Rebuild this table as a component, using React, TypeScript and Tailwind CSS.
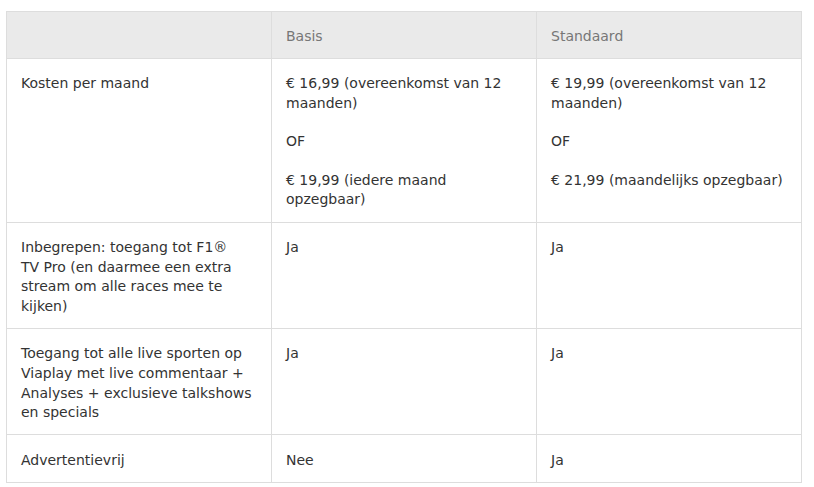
export default function App() {
  const rows: { label: string; basis: string[]; standaard: string[] }[] = [
    {
      label: 'Kosten per maand',
      basis: ['€ 16,99 (overeenkomst van 12 maanden)', 'OF', '€ 19,99 (iedere maand opzegbaar)'],
      standaard: ['€ 19,99 (overeenkomst van 12 maanden)', 'OF', '€ 21,99 (maandelijks opzegbaar)'],
    },
    {
      label: 'Inbegrepen: toegang tot F1® TV\u00a0Pro (en daarmee een extra stream om alle races mee te kijken)',
      basis: ['Ja'],
      standaard: ['Ja'],
    },
    {
      label: 'Toegang tot alle live sporten op Viaplay met live commentaar + Analyses + exclusieve talkshows en specials',
      basis: ['Ja'],
      standaard: ['Ja'],
    },
    {
      label: 'Advertentievrij',
      basis: ['Nee'],
      standaard: ['Ja'],
    },
  ];

  const cell = 'border border-[#dddddd] px-[14px] align-top text-left';

  return (
    <div className="min-h-screen bg-white pt-[11px] pl-[6px] font-['DejaVu_Sans',sans-serif] text-[14px] leading-[19.6px] text-[#333333]">
      <table className="w-[796px] table-fixed border-collapse">
        <thead>
          <tr className="bg-[#eaeaea]">
            <th className={`${cell} pt-[15px] pb-[11px] font-normal`}></th>
            <th className={`${cell} pt-[15px] pb-[11px] font-normal text-[#777777]`}>Basis</th>
            <th className={`${cell} pt-[15px] pb-[11px] font-normal text-[#777777]`}>Standaard</th>
          </tr>
        </thead>
        <tbody>
          {rows.map((row) => (
            <tr key={row.label}>
              <td className={`${cell} pt-[15.5px] pb-[11.5px]`}>{row.label}</td>
              {[row.basis, row.standaard].map((parts, i) => (
                <td key={i} className={`${cell} pt-[15.5px] pb-[11.5px]`}>
                  {parts.map((p, j) => (
                    <p key={j} className={j < parts.length - 1 ? 'mb-[19px]' : ''}>
                      {p}
                    </p>
                  ))}
                </td>
              ))}
            </tr>
          ))}
        </tbody>
      </table>
    </div>
  );
}
